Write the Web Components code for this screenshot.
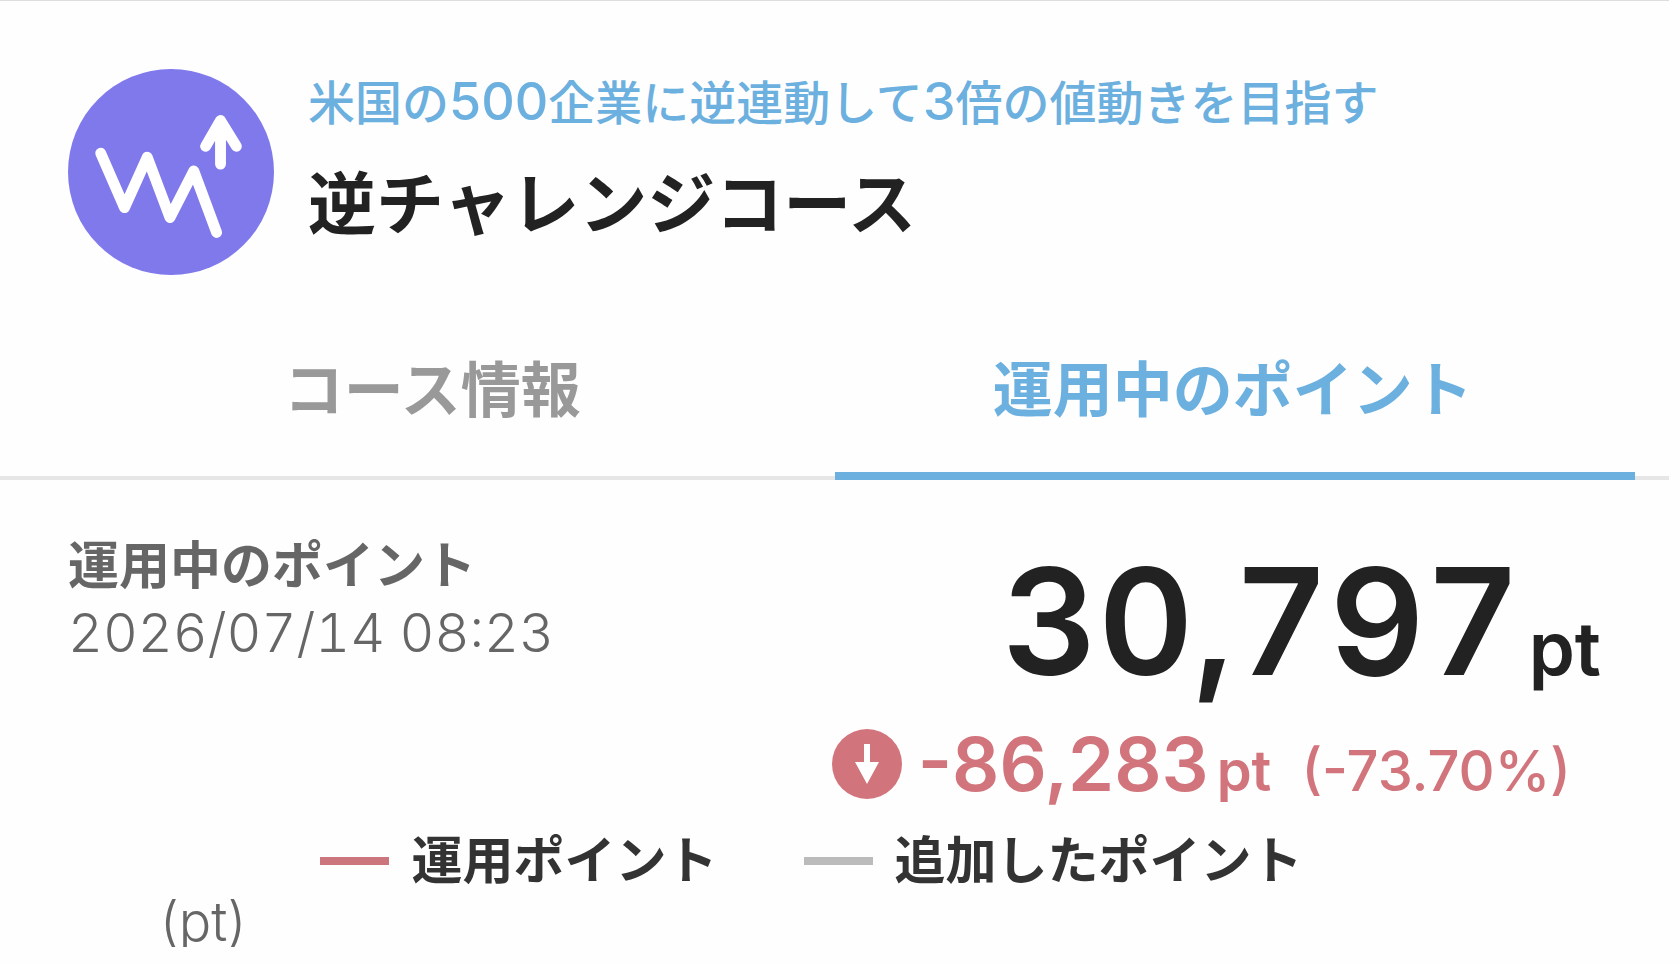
<!DOCTYPE html>
<html lang="ja">
<head>
<meta charset="utf-8">
<meta name="viewport" content="width=device-width, initial-scale=1">
<title>逆チャレンジコース</title>
<style>
    body {
        margin: 0;
        background: #fefefe;
        color: #222;
        font-family: Inter, 'Noto Sans CJK JP', sans-serif;
        font-weight: 500;
        --blue: #6cb0df;
        --red: #d2747c;
        --gray: #666;
    }
    b {
        font-size: 52px;
        font-weight: 500;
    }
</style>
</head>
<body>
<course-page>
    <course-header slot="header">
        <span slot="lead">米国の<b>500</b>企業に逆連動して<b>3</b>倍の値動きを目指す</span>
        <span slot="name">逆チャレンジコース</span>
    </course-header>
    <course-tabs slot="tabs">
        <course-tab>コース情報</course-tab>
        <course-tab active>運用中のポイント</course-tab>
    </course-tabs>
    <point-summary amount="30,797" change="-86,283" rate="-73.70%">
        <span slot="label">運用中のポイント</span>
        <span slot="date">2026/07/14 08:23</span>
    </point-summary>
    <chart-legend unit="(pt)">
        <legend-item color="#cb757d">運用ポイント</legend-item>
        <legend-item color="#bbb">追加したポイント</legend-item>
    </chart-legend>
</course-page>

<script>
// Attach a shadow root and fill it with the given markup
function render(el, html) {
    const template = document.createElement('template');
    template.innerHTML = html;
    el.attachShadow({ mode: 'open' });
    el.shadowRoot.appendChild(template.content.cloneNode(true));
}

// Whole page
class CoursePage extends HTMLElement {
    constructor() {
        super();
        render(this, `
            <style>
                :host {
                    display: block;
                    margin-right: 11px;
                    border-top: 1px solid #ddd;
                }
            </style>
            <slot name="header"></slot>
            <slot name="tabs"></slot>
            <main><slot></slot></main>
        `);
    }
}

// Round logo, lead text and course name
class CourseHeader extends HTMLElement {
    constructor() {
        super();
        render(this, `
            <style>
                :host {
                    display: block;
                }
                header {
                    display: flex;
                    gap: 34px;
                    padding: 68px 68px 57px;
                }
                svg {
                    flex: none;
                    width: 206px;
                    height: 206px;
                }
                p, h1 {
                    margin: 0;
                    white-space: nowrap;
                }
                p {
                    color: var(--blue);
                    font-size: 47px;
                    line-height: 66px;
                }
                h1 {
                    margin-top: 28px;
                    font-size: 68px;
                    line-height: 80px;
                    font-weight: 700;
                }
            </style>
            <header>
                <svg viewBox="0 0 208 208" fill="none" stroke="#fff" stroke-width="11" stroke-linecap="round" stroke-linejoin="round" aria-hidden="true">
                    <circle cx="104" cy="104" r="104" fill="#8079ec" stroke="none"/>
                    <path d="M33 85 L57 140 L80 89 L103 150 L127 103 L150 165"/>
                    <path d="M154 96 V54 M139 78 L154 52 L170 78"/>
                    <path d="M145 70 L154 54 L163 70 Z" fill="#fff" stroke-width="4"/>
                </svg>
                <div>
                    <p><slot name="lead"></slot></p>
                    <h1><slot name="name"></slot></h1>
                </div>
            </header>
        `);
    }
}

// Tab row
class CourseTabs extends HTMLElement {
    constructor() {
        super();
        render(this, `
            <style>
                :host {
                    display: block;
                }
                nav {
                    display: grid;
                    grid-template-columns: 1fr 1fr;
                    padding: 0 34px;
                    background: linear-gradient(#e6e6e6, #e6e6e6) bottom / 100% 4px no-repeat;
                }
            </style>
            <nav role="tablist"><slot></slot></nav>
        `);
    }
}

class CourseTab extends HTMLElement {
    constructor() {
        super();
        render(this, `
            <style>
                :host {
                    display: block;
                }
                button {
                    display: block;
                    width: 100%;
                    height: 148px;
                    padding: 0 4px 24px 0;
                    border: 0;
                    border-bottom: 8px solid transparent;
                    background: none;
                    color: #999;
                    font: inherit;
                    font-size: 60px;
                    line-height: 116px;
                    font-weight: 700;
                    white-space: nowrap;
                    cursor: pointer;
                }
                :host([active]) button {
                    border-bottom-color: var(--blue);
                    color: var(--blue);
                }
            </style>
            <button type="button" role="tab"><slot></slot></button>
        `);
        this.shadowRoot.querySelector('button').setAttribute('aria-selected', this.hasAttribute('active'));
    }
}

// Current points and the change against the points added
class PointSummary extends HTMLElement {
    constructor() {
        super();
        render(this, `
            <style>
                :host {
                    display: block;
                }
                section {
                    display: flex;
                    justify-content: space-between;
                    padding: 50px 68px 0;
                }
                p, h2 {
                    margin: 0;
                    white-space: nowrap;
                }
                h2 {
                    color: var(--gray);
                    font-size: 51px;
                    line-height: 72px;
                    font-weight: 700;
                }
                .date {
                    color: var(--gray);
                    font-size: 54px;
                    line-height: 62px;
                    font-weight: 300;
                    font-variant-numeric: tabular-nums;
                }
                .right {
                    display: flex;
                    flex-direction: column;
                    align-items: flex-end;
                }
                .amount, .change {
                    display: flex;
                    align-items: baseline;
                    font-weight: 600;
                }
                .amount {
                    gap: 8px;
                    font-size: 148px;
                    line-height: 184px;
                }
                .value {
                    font-variant-numeric: tabular-nums;
                }
                .amount .unit {
                    font-size: 74px;
                    line-height: 1;
                }
                .change {
                    gap: 8px;
                    color: var(--red);
                    font-size: 74px;
                    line-height: 100px;
                }
                .change .unit, .rate {
                    font-size: 56px;
                    line-height: 1;
                }
                .rate {
                    margin: 0 30px 0 22px;
                    font-weight: 500;
                }
                svg {
                    align-self: center;
                    width: 70px;
                    height: 70px;
                    margin-right: 8px;
                }
            </style>
            <section>
                <div>
                    <h2><slot name="label"></slot></h2>
                    <p class="date"><slot name="date"></slot></p>
                </div>
                <div class="right">
                    <p class="amount"><span class="value"></span><span class="unit">pt</span></p>
                    <p class="change">
                        <svg viewBox="0 0 70 70" aria-hidden="true">
                            <circle cx="35" cy="35" r="35" fill="#d2747c"/>
                            <path d="M32 15 H38 V33 H47 L35 55 L23 33 H32 Z" fill="#fff"/>
                        </svg>
                        <span class="diff"></span><span class="unit">pt</span><span class="rate"></span>
                    </p>
                </div>
            </section>
        `);
        this.shadowRoot.querySelector('.value').innerText = this.getAttribute('amount');
        this.shadowRoot.querySelector('.diff').innerText = this.getAttribute('change');
        this.shadowRoot.querySelector('.rate').innerText = '(' + this.getAttribute('rate') + ')';
    }
}

// Legend over the chart, with the unit of the vertical axis
class ChartLegend extends HTMLElement {
    constructor() {
        super();
        render(this, `
            <style>
                :host {
                    display: block;
                }
                .items {
                    display: flex;
                    justify-content: center;
                    gap: 86px;
                    padding: 11px 46px 0 0;
                }
                .unit {
                    margin: 0 0 0 160px;
                    color: var(--gray);
                    font-size: 54px;
                    line-height: 50px;
                    font-weight: 300;
                }
            </style>
            <div class="items"><slot></slot></div>
            <p class="unit"></p>
        `);
        this.shadowRoot.querySelector('.unit').innerText = this.getAttribute('unit');
    }
}

class LegendItem extends HTMLElement {
    constructor() {
        super();
        render(this, `
            <style>
                :host {
                    display: flex;
                    align-items: center;
                    gap: 22px;
                    color: #333;
                    font-size: 51px;
                    line-height: 72px;
                    font-weight: 700;
                    white-space: nowrap;
                }
                i {
                    width: 69px;
                    height: 8px;
                }
            </style>
            <i></i><span><slot></slot></span>
        `);
        this.shadowRoot.querySelector('i').style.background = this.getAttribute('color');
    }
}

// Define custom elements
window.customElements.define('course-page', CoursePage);
window.customElements.define('course-header', CourseHeader);
window.customElements.define('course-tabs', CourseTabs);
window.customElements.define('course-tab', CourseTab);
window.customElements.define('point-summary', PointSummary);
window.customElements.define('chart-legend', ChartLegend);
window.customElements.define('legend-item', LegendItem);
</script>
</body>
</html>
